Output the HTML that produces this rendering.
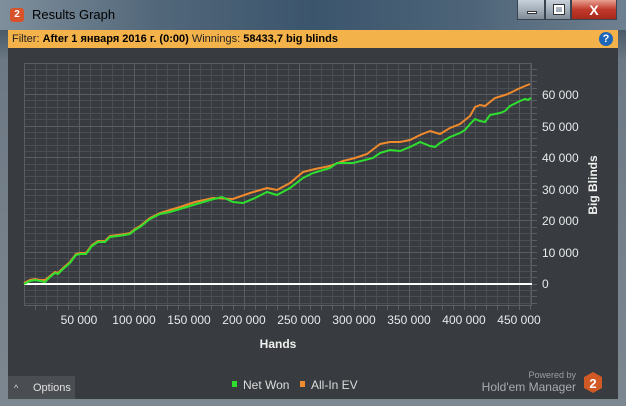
<!DOCTYPE html>
<html><head><meta charset="utf-8"><style>
*{margin:0;padding:0;box-sizing:border-box}
body{width:626px;height:406px;overflow:hidden;background:#3b4a58;font-family:"Liberation Sans",sans-serif;position:relative}
.frame{position:absolute;left:0;top:0;width:626px;height:406px;background:linear-gradient(180deg,#56626d 0,#4a5a68 30px,#6c7884 60px,#7d8790 100%)}
.title{position:absolute;left:0;top:0;width:626px;height:30px;background:linear-gradient(90deg,#7f8f9c 0,#52677a 25%,#3b556d 50%,#4d6478 75%,#6f8090 100%)}
.ttext{position:absolute;left:32px;top:7px;font-size:13px;color:#000}
.logo{position:absolute;left:10px;top:8px;width:14px;height:14px;background:#d8532a;border-radius:3px;color:#fff;font-size:10px;font-weight:bold;text-align:center;line-height:14px}
.btn{position:absolute;top:0;height:20px;border:1px solid #3a4450;border-top:none}
.filter{position:absolute;left:8px;top:30px;width:610px;height:18px;background:#f3b24a;font-size:11px;line-height:18px;padding-left:4px;color:#222}
.filter b{color:#000}
.content{position:absolute;left:8px;top:48px;width:610px;height:351px;background:#383b3f}
.help{position:absolute;right:5px;top:2px;width:14px;height:14px;border-radius:50%;background:#1f66b8;color:#fff;font-size:11px;font-weight:bold;text-align:center;line-height:14px}
</style></head><body>
<div class="frame"></div>
<div class="title"></div>
<div class="logo">2</div>
<div class="ttext">Results Graph</div>
<div class="btn" style="left:517px;width:28px;background:linear-gradient(#c9d2db,#7f8c98)"><div style="position:absolute;left:9px;top:11px;width:10px;height:3px;background:#fff;border:1px solid #333"></div></div>
<div class="btn" style="left:545px;width:26px;background:linear-gradient(#c9d2db,#7f8c98)"><div style="position:absolute;left:8px;top:5px;width:10px;height:9px;border:2px solid #fff;outline:1px solid #333"></div></div>
<div class="btn" style="left:571px;width:46px;background:linear-gradient(#e8a090,#c0392b 50%,#a8291b)"><div style="position:absolute;left:0;width:44px;top:2px;color:#fff;font-weight:bold;font-size:14px;text-align:center">X</div></div>
<div class="filter">Filter: <b>After 1 января 2016 г. (0:00)</b> Winnings: <b>58433,7 big blinds</b><div class="help">?</div></div>
<div class="content"></div>
<svg style="position:absolute;left:0;top:0" width="626" height="406" font-family="Liberation Sans, sans-serif">
<g stroke="#4c4f53" stroke-width="1" id="minor"></g>
<script>
</script>
<g stroke="#4b4e52" stroke-width="1">
<!-- minor verticals -->
<path d="M35.5 63V310M46.5 63V310M57.5 63V310M68.5 63V310M90.5 63V310M101.5 63V310M112.5 63V310M123.5 63V310M145.5 63V310M156.5 63V310M167.5 63V310M178.5 63V310M200.5 63V310M211.5 63V310M222.5 63V310M233.5 63V310M255.5 63V310M266.5 63V310M277.5 63V310M288.5 63V310M310.5 63V310M321.5 63V310M332.5 63V310M343.5 63V310M365.5 63V310M376.5 63V310M387.5 63V310M398.5 63V310M420.5 63V310M431.5 63V310M442.5 63V310M453.5 63V310M475.5 63V310M486.5 63V310M497.5 63V310M508.5 63V310M530.5 63V310"/>
<path d="M24 69.5H537M24 75.5H537M24 81.5H537M24 88.5H537M24 100.5H537M24 107.5H537M24 113.5H537M24 119.5H537M24 132.5H537M24 138.5H537M24 145.5H537M24 151.5H537M24 164.5H537M24 170.5H537M24 176.5H537M24 183.5H537M24 195.5H537M24 202.5H537M24 208.5H537M24 214.5H537M24 227.5H537M24 233.5H537M24 240.5H537M24 246.5H537M24 258.5H537M24 265.5H537M24 271.5H537M24 277.5H537M24 290.5H537M24 296.5H537M24 303.5H537"/>
</g>
<g stroke="#5a5d61" stroke-width="1">
<path d="M79.5 63V310M134.5 63V310M189.5 63V310M244.5 63V310M299.5 63V310M354.5 63V310M409.5 63V310M464.5 63V310M519.5 63V310"/>
<path d="M24 94.5H537M24 126.5H537M24 157.5H537M24 189.5H537M24 220.5H537M24 252.5H537"/>
<rect x="24.5" y="63.5" width="507" height="242" fill="none"/>
</g>
<rect x="24" y="306" width="513" height="6" fill="#383b3f"/>
<rect x="532" y="60" width="6" height="250" fill="#383b3f"/>
<g stroke="#5a5d61"><path d="M35.5 305V310M46.5 305V310M57.5 305V310M68.5 305V310M79.5 305V310M90.5 305V310M101.5 305V310M112.5 305V310M123.5 305V310M134.5 305V310M145.5 305V310M156.5 305V310M167.5 305V310M178.5 305V310M189.5 305V310M200.5 305V310M211.5 305V310M222.5 305V310M233.5 305V310M244.5 305V310M255.5 305V310M266.5 305V310M277.5 305V310M288.5 305V310M299.5 305V310M310.5 305V310M321.5 305V310M332.5 305V310M343.5 305V310M354.5 305V310M365.5 305V310M376.5 305V310M387.5 305V310M398.5 305V310M409.5 305V310M420.5 305V310M431.5 305V310M442.5 305V310M453.5 305V310M464.5 305V310M475.5 305V310M486.5 305V310M497.5 305V310M508.5 305V310M519.5 305V310M530.5 305V310"/>
<path d="M531 69.5H537M531 75.5H537M531 81.5H537M531 88.5H537M531 94.5H537M531 100.5H537M531 107.5H537M531 113.5H537M531 119.5H537M531 126.5H537M531 132.5H537M531 138.5H537M531 145.5H537M531 151.5H537M531 157.5H537M531 164.5H537M531 170.5H537M531 176.5H537M531 183.5H537M531 189.5H537M531 195.5H537M531 202.5H537M531 208.5H537M531 214.5H537M531 220.5H537M531 227.5H537M531 233.5H537M531 240.5H537M531 246.5H537M531 252.5H537M531 258.5H537M531 265.5H537M531 271.5H537M531 277.5H537M531 284.5H537M531 290.5H537M531 296.5H537M531 303.5H537"/></g>
<line x1="24" y1="284" x2="532" y2="284" stroke="#ffffff" stroke-width="2"/>
<polyline fill="none" stroke="#f08a2c" stroke-width="2" points="24,283 30,280 35,279 40,280 45,280 50,276 55,272 58,273 62,269 70,262 76,254 80,253 86,253 92,245 98,241 105,241 110,236 118,235 125,234 130,233 135,229 140,226 150,218 160,213 170,210 180,207 195,202 213,198 233,199 250,193 267,188 277,190 290,183 303,172 315,169 330,166 343,161 355,158 367,154 380,144 390,142 400,142 410,140 420,135 430,131 440,134 450,128 460,124 465,120 470,116 475,107 480,105 485,106 490,102 495,98 505,95 510,93 518,89 525,86 530,84"/>
<polyline fill="none" stroke="#2ee02e" stroke-width="2" points="24,284 30,281 35,280 40,281 45,282 50,277 55,273 58,274 62,270 70,263 76,255 80,254 86,254 92,246 98,242 105,242 110,237 118,236 125,235 130,234 135,230 140,227 150,219 160,214 170,212 180,209 200,203 210,200 222,197 233,202 243,203 255,198 267,192 277,195 290,188 303,178 313,173 330,168 337,163 353,163 373,158 380,153 390,150 400,151 410,147 420,142 430,146 435,147 440,143 450,137 460,133 465,130 470,124 475,119 480,121 485,122 490,115 500,113 505,111 510,106 520,101 525,99 528,100 531,98"/>
<g fill="#e8eaec" font-size="12" text-anchor="middle">
<text x="79" y="324">50 000</text><text x="134" y="324">100 000</text><text x="189" y="324">150 000</text><text x="244" y="324">200 000</text><text x="299" y="324">250 000</text><text x="354" y="324">300 000</text><text x="409" y="324">350 000</text><text x="464" y="324">400 000</text><text x="519" y="324">450 000</text>
</g>
<g fill="#e8eaec" font-size="12">
<text x="542" y="99">60 000</text><text x="542" y="131">50 000</text><text x="542" y="162">40 000</text><text x="542" y="194">30 000</text><text x="542" y="225">20 000</text><text x="542" y="257">10 000</text><text x="542" y="288">0</text>
</g>
<text x="278" y="348" fill="#f0f0f0" font-size="12" font-weight="bold" text-anchor="middle">Hands</text>
<text transform="translate(597,185) rotate(-90)" fill="#f0f0f0" font-size="12" font-weight="bold" text-anchor="middle">Big Blinds</text>
<rect x="8" y="376" width="67" height="23" fill="#4a4d51"/>
<text x="14" y="391" fill="#ddd" font-size="9">^</text>
<text x="33" y="391" fill="#e0e0e0" font-size="11">Options</text>
<rect x="232" y="381" width="5" height="6" fill="#2ee02e"/>
<text x="243" y="389" fill="#dcdcdc" font-size="12">Net Won</text>
<rect x="300" y="381" width="5" height="6" fill="#f08a2c"/>
<text x="311" y="389" fill="#dcdcdc" font-size="12">All-In EV</text>
<text x="576" y="378" fill="#9a9da1" font-size="9" text-anchor="end">Powered by</text>
<text x="576" y="391" fill="#a8abaf" font-size="12" text-anchor="end">Hold'em Manager</text>
<polygon points="593,372 602,377 602,388 593,393 584,388 584,377" fill="#d15a24"/>
<text x="593" y="388" fill="#fff" font-size="13" font-weight="bold" text-anchor="middle">2</text>
</svg>
</body></html>
